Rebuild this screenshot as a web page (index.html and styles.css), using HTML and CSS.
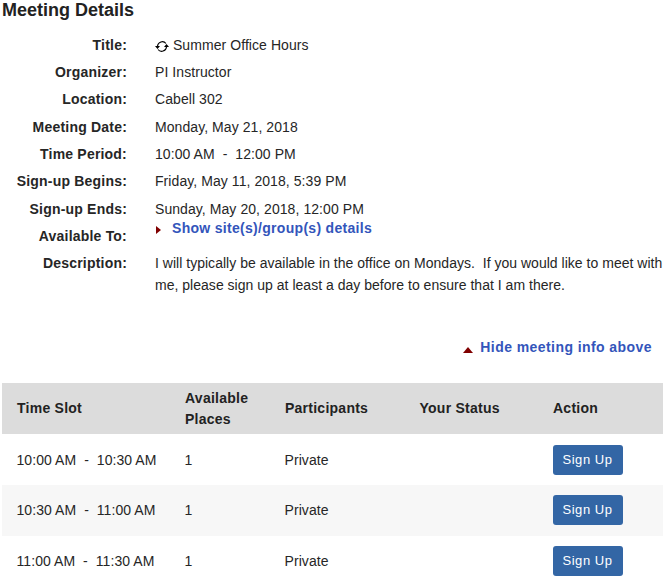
FILE: index.html
```html
<!DOCTYPE html>
<html lang="en">
<head>
<meta charset="utf-8">
<title>Meeting Details</title>
<link rel="stylesheet" href="styles.css">
</head>
<body>
<h1 class="page-title">Meeting Details</h1>
<dl class="details">
  <div class="row"><dt>Title:</dt><dd><svg class="recur" width="14" height="13" viewBox="0 0 14 13"><path d="M2.500 6A4.800 4.800 0 0 1 11 3.500M11.500 7A4.800 4.800 0 0 1 3 9.500" fill="none" stroke="#000" stroke-width="1.100"/><path d="M0 6h5L2.500 9zM9 7h5L11.500 4z" fill="#000"/></svg> Summer Office Hours</dd></div>
  <div class="row"><dt>Organizer:</dt><dd>PI Instructor</dd></div>
  <div class="row"><dt>Location:</dt><dd>Cabell 302</dd></div>
  <div class="row"><dt>Meeting Date:</dt><dd>Monday, May 21, 2018</dd></div>
  <div class="row"><dt>Time Period:</dt><dd>10:00 AM &nbsp;-&nbsp; 12:00 PM</dd></div>
  <div class="row"><dt>Sign-up Begins:</dt><dd>Friday, May 11, 2018, 5:39 PM</dd></div>
  <div class="row"><dt>Sign-up Ends:</dt><dd>Sunday, May 20, 2018, 12:00 PM</dd></div>
  <div class="row row-avail"><dt>Available To:</dt><dd><a class="toggle toggle-show" href="#"><span class="arrow-right"></span>Show site(s)/group(s) details</a></dd></div>
  <div class="row row-desc"><dt>Description:</dt><dd>I will typically be available in the office on Mondays.&nbsp; If you would like to meet with me, please sign up at least a day before to ensure that I am there.</dd></div>
</dl>
<div class="hide-line"><a class="toggle toggle-hide" href="#"><span class="arrow-up"></span>Hide meeting info above</a></div>
<table class="slots">
  <thead>
    <tr><th class="c1">Time Slot</th><th class="c2">Available Places</th><th class="c3">Participants</th><th class="c4">Your Status</th><th>Action</th></tr>
  </thead>
  <tbody>
    <tr><td>10:00 AM &nbsp;-&nbsp; 10:30 AM</td><td>1</td><td>Private</td><td></td><td><button class="btn">Sign Up</button></td></tr>
    <tr class="alt"><td>10:30 AM &nbsp;-&nbsp; 11:00 AM</td><td>1</td><td>Private</td><td></td><td><button class="btn">Sign Up</button></td></tr>
    <tr><td>11:00 AM &nbsp;-&nbsp; 11:30 AM</td><td>1</td><td>Private</td><td></td><td><button class="btn">Sign Up</button></td></tr>
  </tbody>
</table>
</body>
</html>
```
FILE: styles.css
```css
html, body { margin: 0; padding: 0; }
html { height: 577px; overflow: hidden; }
body { font-family: "Liberation Sans", Arial, sans-serif; font-size: 14px; color: #262626; background: #fff; letter-spacing: 0.07px; }
.page-title { margin: 0; padding: 1px 0 0 2px; font-size: 18px; line-height: 19px; font-weight: bold; color: #222; letter-spacing: 0; }
.details { margin: 0; padding-top: 14.8px; }
.row { display: flex; height: 27.3px; line-height: 20px; }
.row dt { width: 127px; text-align: right; font-weight: bold; letter-spacing: 0.2px; flex: none; }
.row dd { margin: 0 0 0 28px; flex: 1; }
.row-avail dd { margin-top: -8px; }
.row-desc { height: auto; line-height: 22px; }
.row-desc dt { line-height: 20px; }
.row-desc dd { margin-top: -1px; letter-spacing: 0.02px; }
.recur { vertical-align: -3px; }
.toggle { color: #3355bb; font-weight: bold; text-decoration: none; letter-spacing: 0.3px; }
.toggle-hide { letter-spacing: 0.43px; }
.arrow-right { display: inline-block; width: 0; height: 0; border-left: 5px solid #800000; border-top: 4.500px solid transparent; border-bottom: 4.500px solid transparent; margin: 0 11px 0 1px; vertical-align: -1px; }
.arrow-up { display: inline-block; width: 0; height: 0; border-bottom: 6px solid #800000; border-left: 5px solid transparent; border-right: 5px solid transparent; margin-right: 7px; vertical-align: -1px; }
.hide-line { text-align: right; padding: 41px 11px 0 0; height: 26px; line-height: 20px; }
.slots { margin: 20px 0 0 2px; width: 661px; border-collapse: collapse; table-layout: fixed; }
.slots th { background: #dcdcdc; height: 51px; padding: 0 0 0 15px; text-align: left; line-height: 21px; font-weight: bold; letter-spacing: 0.25px; color: #222; box-sizing: border-box; }
.slots td { height: 50.75px; padding: 0 0 0 14.500px; box-sizing: border-box; }
.slots .c1 { width: 168px; }
.slots .c2 { width: 100px; padding-left: 15px; }
.slots .c3 { width: 135px; }
.slots .c4 { width: 133px; padding-left: 14.500px; }
.alt td { background: #f7f7f7; }
.btn { display: block; width: 70px; height: 30px; border: 0; border-radius: 3px; background: #3366a5; color: #fff; font-family: inherit; font-size: 13px; letter-spacing: 0.55px; padding: 0 0 1px; }
```
